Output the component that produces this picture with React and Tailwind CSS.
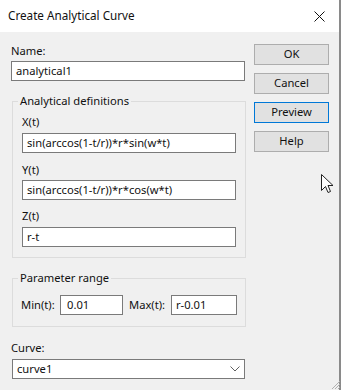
import React from "react";

const font = { fontFamily: '"Noto Sans", "Segoe UI", sans-serif' };

function Field({ value, className = "" }) {
  return (
    <div className={`h-[20px] bg-white border border-[#7a7a7a] flex items-center pl-[4px] text-[11.2px] leading-none text-[#111] ${className}`}>
      {value}
    </div>
  );
}

function Btn({ children, focused }) {
  return (
    <div
      className={`h-[21px] w-[75px] flex items-center justify-center text-[11.2px] text-[#111] bg-[#e1e1e1] border ${
        focused ? "border-[#0078d7]" : "border-[#adadad]"
      }`}
    >
      {children}
    </div>
  );
}

export default function App() {
  return (
    <div className="w-[343px] h-[390px] bg-white relative overflow-hidden" style={font}>
      <div className="w-[341px] h-[390px] border-r-[2px] border-[#8a8a8a] flex flex-col bg-[#f0f0f0]">
        {/* Title bar */}
        <div className="h-[32px] bg-white flex items-center justify-between pl-[8px] pr-[14px] shrink-0">
          <span className="text-[11.7px] text-[#111]">Create Analytical Curve</span>
          <svg width="11" height="11" viewBox="0 0 11 11">
            <path d="M0.5 0.5 L10.5 10.5 M10.5 0.5 L0.5 10.5" stroke="#111" strokeWidth="1" />
          </svg>
        </div>
        {/* Body */}
        <div className="flex flex-1 relative">
          <div className="w-[246px] pl-[11px] flex flex-col text-[11.2px] text-[#111] leading-[16px]">
            <div className="mt-[11px]">Name:</div>
            <Field value="analytical1" className="mt-[2px] w-[234px]" />

            <fieldset className="mt-[12px] ml-[1px] w-[234px] border border-[#dcdcdc] pl-[9px] pr-[9px] pb-[10px] m-0">
              <legend className="ml-[-4px] px-[2px] leading-[16px]">Analytical definitions</legend>
              <div className="mt-[5px]">X(t)</div>
              <Field value="sin(arccos(1-t/r))*r*sin(w*t)" className="mt-[3px]" />
              <div className="mt-[9px]">Y(t)</div>
              <Field value="sin(arccos(1-t/r))*r*cos(w*t)" className="mt-[2px]" />
              <div className="mt-[8px]">Z(t)</div>
              <Field value="r-t" className="mt-[3px]" />
            </fieldset>

            <fieldset className="mt-[12px] ml-[1px] w-[234px] border border-[#dcdcdc] pl-[8px] pr-[8px] pb-[11px] m-0">
              <legend className="ml-[-3px] px-[2px] leading-[16px]">Parameter range</legend>
              <div className="mt-[9px] flex items-center">
                <span className="w-[39px]">Min(t):</span>
                <Field value="0.01" className="w-[63px] pl-[6px]" />
                <span className="ml-[6px] w-[42px]">Max(t):</span>
                <Field value="r-0.01" className="w-[66px]" />
              </div>
            </fieldset>

            <div className="mt-[13px]">Curve:</div>
            <div className="mt-[3px] ml-[1px] w-[233px] h-[20px] bg-white border border-[#7a7a7a] flex items-center justify-between pl-[4px] pr-[4px] leading-none">
              <span>curve1</span>
              <svg width="10" height="6" viewBox="0 0 10 6">
                <path d="M0.5 0.5 L5 5 L9.5 0.5" stroke="#606060" strokeWidth="1" fill="none" />
              </svg>
            </div>
          </div>

          <div className="ml-[8px] mt-[12px] flex flex-col gap-[8px]">
            <Btn>OK</Btn>
            <Btn>Cancel</Btn>
            <Btn focused>Preview</Btn>
            <Btn>Help</Btn>
          </div>
        </div>
      </div>

      {/* mouse cursor */}
      <svg className="absolute left-[321px] top-[174px]" width="13" height="21" viewBox="0 0 13 21">
        <path
          d="M0.5 0.5 L0.5 16.5 L4.5 12.5 L7 18.5 L9.5 17.5 L7 11.5 L12 11.5 Z"
          fill="white"
          stroke="#222"
          strokeWidth="1"
          strokeLinejoin="round"
        />
      </svg>

      {/* resize grip */}
      <svg className="absolute left-[331px] top-[380px]" width="10" height="10" viewBox="0 0 10 10">
        <path d="M9 1 L1 9 M9 4 L4 9 M9 7 L7 9" stroke="#b0b0b0" strokeWidth="1" />
      </svg>
    </div>
  );
}
